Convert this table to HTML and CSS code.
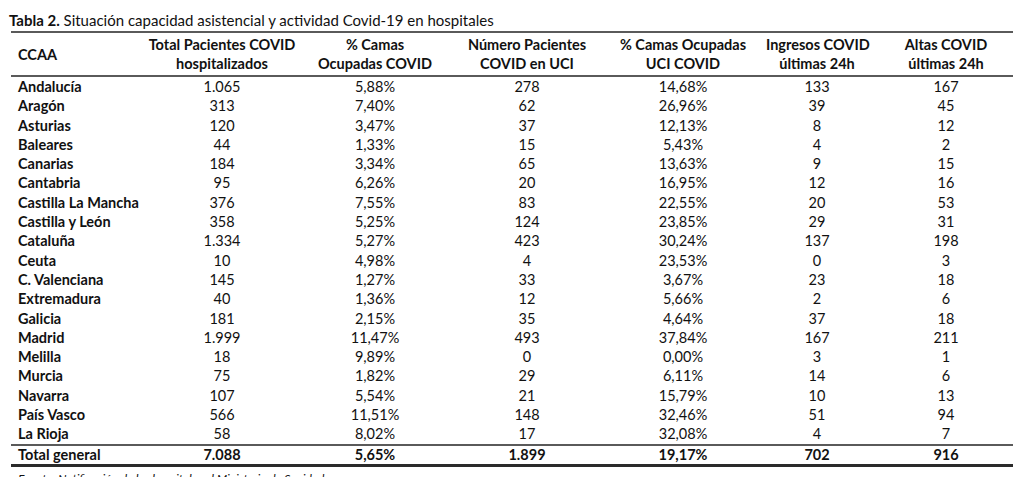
FILE: index.html
```html
<!DOCTYPE html>
<html lang="es">
<head>
<meta charset="utf-8">
<link rel="stylesheet" href="styles.css">
</head>
<body>
<div class="page">
  <div class="caption"><b>Tabla 2.</b> Situación capacidad asistencial y actividad Covid-19 en hospitales</div>
  <table class="data">
    <colgroup>
      <col class="c1"><col class="c2"><col class="c3"><col class="c4"><col class="c5"><col class="c6"><col class="c7">
    </colgroup>
    <thead>
      <tr>
        <th class="name">CCAA</th>
        <th>Total Pacientes COVID<br>hospitalizados</th>
        <th>% Camas<br>Ocupadas COVID</th>
        <th>Número Pacientes<br>COVID en UCI</th>
        <th>% Camas Ocupadas<br>UCI COVID</th>
        <th>Ingresos COVID<br>últimas 24h</th>
        <th class="last">Altas COVID<br>últimas 24h</th>
      </tr>
    </thead>
    <tbody>
      <tr><th class="name">Andalucía</th><td>1.065</td><td>5,88%</td><td>278</td><td>14,68%</td><td>133</td><td class="last">167</td></tr>
      <tr><th class="name">Aragón</th><td>313</td><td>7,40%</td><td>62</td><td>26,96%</td><td>39</td><td class="last">45</td></tr>
      <tr><th class="name">Asturias</th><td>120</td><td>3,47%</td><td>37</td><td>12,13%</td><td>8</td><td class="last">12</td></tr>
      <tr><th class="name">Baleares</th><td>44</td><td>1,33%</td><td>15</td><td>5,43%</td><td>4</td><td class="last">2</td></tr>
      <tr><th class="name">Canarias</th><td>184</td><td>3,34%</td><td>65</td><td>13,63%</td><td>9</td><td class="last">15</td></tr>
      <tr><th class="name">Cantabria</th><td>95</td><td>6,26%</td><td>20</td><td>16,95%</td><td>12</td><td class="last">16</td></tr>
      <tr><th class="name">Castilla La Mancha</th><td>376</td><td>7,55%</td><td>83</td><td>22,55%</td><td>20</td><td class="last">53</td></tr>
      <tr><th class="name">Castilla y León</th><td>358</td><td>5,25%</td><td>124</td><td>23,85%</td><td>29</td><td class="last">31</td></tr>
      <tr><th class="name">Cataluña</th><td>1.334</td><td>5,27%</td><td>423</td><td>30,24%</td><td>137</td><td class="last">198</td></tr>
      <tr><th class="name">Ceuta</th><td>10</td><td>4,98%</td><td>4</td><td>23,53%</td><td>0</td><td class="last">3</td></tr>
      <tr><th class="name">C. Valenciana</th><td>145</td><td>1,27%</td><td>33</td><td>3,67%</td><td>23</td><td class="last">18</td></tr>
      <tr><th class="name">Extremadura</th><td>40</td><td>1,36%</td><td>12</td><td>5,66%</td><td>2</td><td class="last">6</td></tr>
      <tr><th class="name">Galicia</th><td>181</td><td>2,15%</td><td>35</td><td>4,64%</td><td>37</td><td class="last">18</td></tr>
      <tr><th class="name">Madrid</th><td>1.999</td><td>11,47%</td><td>493</td><td>37,84%</td><td>167</td><td class="last">211</td></tr>
      <tr><th class="name">Melilla</th><td>18</td><td>9,89%</td><td>0</td><td>0,00%</td><td>3</td><td class="last">1</td></tr>
      <tr><th class="name">Murcia</th><td>75</td><td>1,82%</td><td>29</td><td>6,11%</td><td>14</td><td class="last">6</td></tr>
      <tr><th class="name">Navarra</th><td>107</td><td>5,54%</td><td>21</td><td>15,79%</td><td>10</td><td class="last">13</td></tr>
      <tr><th class="name">País Vasco</th><td>566</td><td>11,51%</td><td>148</td><td>32,46%</td><td>51</td><td class="last">94</td></tr>
      <tr><th class="name">La Rioja</th><td>58</td><td>8,02%</td><td>17</td><td>32,08%</td><td>4</td><td class="last">7</td></tr>
    </tbody>
    <tfoot>
      <tr><th class="name">Total general</th><td>7.088</td><td>5,65%</td><td>1.899</td><td>19,17%</td><td>702</td><td class="last">916</td></tr>
    </tfoot>
  </table>
  <div class="source">Fuente: Notificación de los hospitales al Ministerio de Sanidad</div>
</div>
</body>
</html>
```
FILE: styles.css
```css
html, body {
  margin: 0;
  padding: 0;
  background: #ffffff;
}
body {
  font-family: Lato, "Open Sans", "Liberation Sans", sans-serif;
  color: #111111;
  font-size: 14.5px;
}
.page {
  padding: 11px 0 0 11px;
  width: 1002px;
}
.caption {
  margin-left: -2px;
  font-size: 15px;
  line-height: 18px;
  height: 20px;
}
.caption b {
  font-weight: 700;
}
.data {
  border-collapse: collapse;
  table-layout: fixed;
  width: 1002px;
  border-top: 2px solid #5a5a5a;
  border-bottom: 3px solid #2a2a2a;
}
.c1 { width: 137px; }
.c2 { width: 148px; }
.c3 { width: 158px; }
.c4 { width: 146px; }
.c5 { width: 166px; }
.c6 { width: 102px; }
.c7 { width: 145px; }
.data th, .data td {
  padding: 0;
  text-align: center;
  white-space: nowrap;
  font-size: 14.5px;
}
.data thead th {
  font-weight: 700;
  line-height: 19px;
  padding: 2px 0 2px;
  border-bottom: 2px solid #5a5a5a;
}
.data tbody td, .data tbody th {
  height: 19.3px;
  line-height: 19.3px;
}
.data th.name {
  text-align: left;
  padding-left: 7px;
  font-weight: 700;
}
.data td.last, .data th.last {
  padding-left: 11px;
}
.data tfoot th, .data tfoot td {
  font-weight: 700;
  height: 18px;
  line-height: 18px;
  border-top: 2px solid #5a5a5a;
}
.source {
  font-style: italic;
  font-size: 12px;
  line-height: 16px;
  padding-top: 4px;
  margin-left: 7px;
}
```
